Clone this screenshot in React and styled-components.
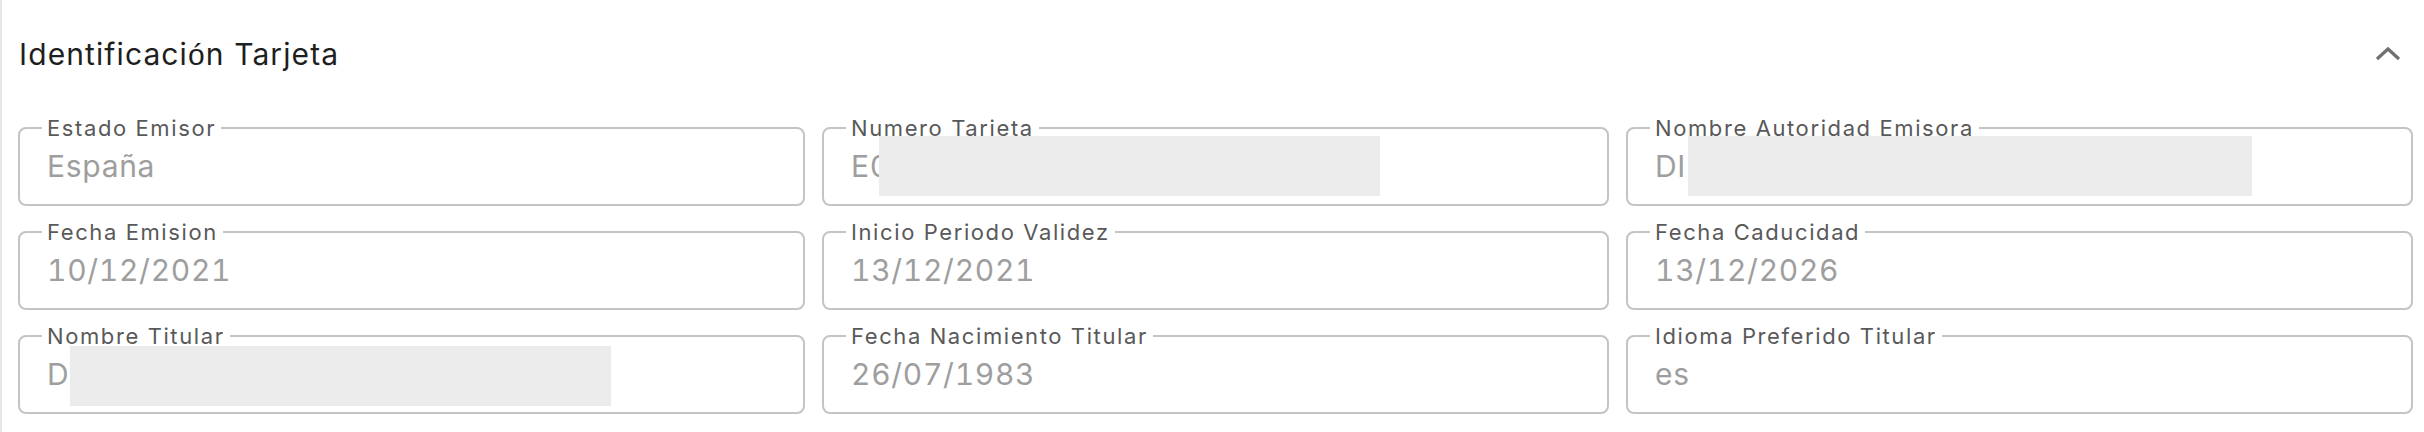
import styled, { createGlobalStyle } from 'styled-components';

const GlobalStyle = createGlobalStyle`
  body {
    margin: 0;
    background: #ffffff;
    font-family: 'Inter', 'Liberation Sans', sans-serif;
  }
`;

const Card = styled.section`
  border-left: 2px solid #e6e6e6;
  min-height: 432px;
  box-sizing: border-box;
`;

const Header = styled.div`
  display: flex;
  align-items: center;
  justify-content: space-between;
  height: 108px;
  padding: 0 22px 0 17px;
`;

const Title = styled.h2`
  margin: 0;
  font-size: 30px;
  font-weight: 400;
  color: #1f1f1f;
  letter-spacing: 1.1px;
`;

const Accent = styled.span`
  font-family: 'Liberation Sans', sans-serif;
`;

const Toggle = styled.button`
  border: none;
  background: none;
  padding: 0;
  width: 28px;
  height: 18px;
  display: flex;
  align-items: center;
  justify-content: center;
  cursor: pointer;
`;

const Grid = styled.div`
  display: grid;
  grid-template-columns: repeat(3, 1fr);
  column-gap: 17px;
  row-gap: 14px;
  padding: 8px 11px 0 16px;
`;

const Field = styled.fieldset`
  margin: 0;
  min-width: 0;
  padding: 8px 22px 20px;
  border: 2px solid #c4c4c4;
  border-radius: 8px;
`;

const Label = styled.legend`
  padding: 0 5px;
  font-size: 22px;
  line-height: 24px;
  letter-spacing: 1.6px;
  color: #595959;
`;

const Value = styled.div`
  position: relative;
  padding-left: 5px;
  font-size: 30px;
  line-height: 36px;
  letter-spacing: 0.7px;
  font-variant-numeric: tabular-nums;
  color: #9e9e9e;
  white-space: nowrap;
`;

const Redaction = styled.span`
  position: absolute;
  z-index: 1;
  height: 60px;
  background: #ebebeb;
`;

const fields = [
  { label: 'Estado Emisor', value: 'España' },
  { label: 'Numero Tarjeta', value: 'E0', mask: { left: 33, width: 501, top: -12 } },
  { label: 'Nombre Autoridad Emisora', value: 'DI', mask: { left: 38, width: 564, top: -12 } },
  { label: 'Fecha Emision', value: '10/12/2021' },
  { label: 'Inicio Periodo Validez', value: '13/12/2021' },
  { label: 'Fecha Caducidad', value: '13/12/2026' },
  { label: 'Nombre Titular', value: 'D', mask: { left: 28, width: 541, top: -10 } },
  { label: 'Fecha Nacimiento Titular', value: '26/07/1983' },
  { label: 'Idioma Preferido Titular', value: 'es' },
];

function App() {
  return (
    <>
      <GlobalStyle />
      <Card>
        <Header>
          <Title>
            Identificaci<Accent>ó</Accent>n Tarjeta
          </Title>
          <Toggle aria-label="Contraer">
            <svg width="26" height="16" viewBox="0 0 26 16">
              <polyline
                points="2,13 13,3 24,13"
                fill="none"
                stroke="#707070"
                strokeWidth="3.2"
              />
            </svg>
          </Toggle>
        </Header>
        <Grid>
          {fields.map((f) => (
            <Field key={f.label}>
              <Label>{f.label}</Label>
              <Value>
                {f.value}
                {f.mask && (
                  <Redaction
                    style={{ left: f.mask.left, width: f.mask.width, top: f.mask.top }}
                  />
                )}
              </Value>
            </Field>
          ))}
        </Grid>
      </Card>
    </>
  );
}

export default App;
